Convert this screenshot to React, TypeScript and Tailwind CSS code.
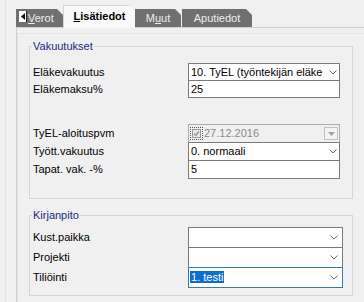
import React from "react";

const tabClip = "[clip-path:polygon(0_0,calc(100%-6px)_0,100%_6px,100%_100%,0_100%)]";

function Chevron() {
  return (
    <svg width="8" height="5" viewBox="0 0 8 5" className="shrink-0">
      <path d="M0.5 0.5 L4 4 L7.5 0.5" fill="none" stroke="#6b6b6b" strokeWidth="1" />
    </svg>
  );
}

function Combo({ value, wide, focused, selected }: { value?: string; wide?: boolean; focused?: boolean; selected?: boolean }) {
  return (
    <div
      className={`flex items-center h-full bg-white border pl-[1px] ${wide ? "w-[155px] pr-[4px]" : "w-[152px] pr-[2px]"} ${
        focused ? "border-[#3a78ad]" : "border-[#7a7a7a]"
      }`}
    >
      <div className="flex-1 min-w-0 overflow-hidden whitespace-nowrap">
        {selected ? (
          <span className="bg-[#0a6fd0] text-white px-px">{value}</span>
        ) : (
          <span className="pl-px">{value}</span>
        )}
      </div>
      <Chevron />
    </div>
  );
}

function Edit({ value }: { value: string }) {
  return (
    <div className="flex items-center h-full w-[152px] bg-white border border-[#7a7a7a] pl-[2px]">{value}</div>
  );
}

function DateBox() {
  return (
    <div className="flex items-center h-full w-[152px] bg-[#f0f0f0] border border-[#adadad] pl-[1px] pr-[1px]">
      <div className="border border-dotted border-[#555] p-px">
        <div className="w-[9px] h-[9px] border border-[#9a9a9a] bg-[#e6e6e6] flex items-center justify-center">
          <svg width="7" height="7" viewBox="0 0 7 7">
            <path d="M1 3.5 L2.8 5.3 L6 1.5" fill="none" stroke="#8c8c8c" strokeWidth="1.2" />
          </svg>
        </div>
      </div>
      <span className="ml-px text-[#8a8a8a] flex-1">27.12.2016</span>
      <div className="w-[14px] h-[13px] border border-[#c2c2c2] bg-[#f4f4f4] flex items-center justify-center">
        <svg width="7" height="4" viewBox="0 0 7 4">
          <path d="M0 0 L7 0 L3.5 4 Z" fill="#a0a0a0" />
        </svg>
      </div>
    </div>
  );
}

function Row({ label, h, children, className = "" }: { label: string; h: string; children: React.ReactNode; className?: string }) {
  return (
    <div className={`flex items-center ${h} ${className}`}>
      <div className="w-[155px] shrink-0 whitespace-nowrap">{label}</div>
      {children}
    </div>
  );
}

export default function App() {
  return (
    <div className="w-[364px] h-[302px] bg-[#f0f0f0] overflow-hidden flex font-['Liberation_Sans',Arial,sans-serif] text-[11px] leading-[13px] text-black">
      <div className="w-[5px] shrink-0" />
      <div className="w-px shrink-0 bg-[#e2e2e2]" />
      <div className="w-[10px] shrink-0" />

      <div className="flex-1 flex flex-col min-w-0">
        {/* tab strip */}
        <div className="relative flex items-end h-[27px] shrink-0">
          <div className={`w-[47px] h-[18px] bg-[#707070] text-[#ededed] pl-[12px] flex items-center ${tabClip}`}>
            <span>
              <u>V</u>erot
            </span>
          </div>
          <div className={`relative z-10 w-[72px] h-[23px] -mb-px bg-[#f9f9f9] border-l border-t border-[#d6d6d6] font-bold flex items-center justify-center pb-[2px] ${tabClip}`}>
            <span>
              <u>L</u>isätiedot
            </span>
          </div>
          <div className={`w-[46px] h-[18px] bg-[#707070] text-[#ededed] flex items-center justify-center ${tabClip}`}>
            <span>
              M<u>u</u>ut
            </span>
          </div>
          <div className="w-px" />
          <div className={`w-[70px] h-[18px] bg-[#707070] text-[#ededed] flex items-center justify-center ${tabClip}`}>
            Aputiedot
          </div>
          <div className="absolute left-[3px] top-[11px] w-[8px] h-[11px] bg-white border-r border-[#222] flex items-center justify-center">
            <svg width="4" height="7" viewBox="0 0 4 7">
              <path d="M4 0 L0 3.5 L4 7 Z" fill="#111" />
            </svg>
          </div>
        </div>

        {/* tab page */}
        <div className="flex-1 border-t border-l border-[#d0d0d0]">
          <div className="mt-[5px] border-t border-l border-[#e4e4e4] h-full pl-[11px]">
            <fieldset className="mt-[6px] w-[324px] border border-[#d5d5d5] pl-[3px] pt-[10px] pb-[19px]">
              <legend className="text-[#1b2a80] px-px -ml-px">Vakuutukset</legend>
              <Row label="Eläkevakuutus" h="h-[18px]">
                <Combo value="10. TyEL (työntekijän eläke" />
              </Row>
              <Row label="Eläkemaksu%" h="h-[18px]" className="-mt-px">
                <Edit value="25" />
              </Row>
              <Row label="TyEL-aloituspvm" h="h-[19px]" className="mt-[26px]">
                <DateBox />
              </Row>
              <Row label="Tyött.vakuutus" h="h-[19px]" className="-mt-px">
                <Combo value="0. normaali" />
              </Row>
              <Row label="Tapat. vak. -%" h="h-[19px]" className="-mt-px">
                <Edit value="5" />
              </Row>
            </fieldset>

            <fieldset className="mt-[10px] w-[324px] border border-[#d5d5d5] pl-[3px] pt-[5px] pb-[7px]">
              <legend className="text-[#1b2a80] px-px -ml-px">Kirjanpito</legend>
              <Row label="Kust.paikka" h="h-[21px]">
                <Combo wide />
              </Row>
              <Row label="Projekti" h="h-[21px]" className="-mt-px">
                <Combo wide />
              </Row>
              <Row label="Tiliöinti" h="h-[21px]" className="-mt-px">
                <Combo wide focused selected value="1. testi" />
              </Row>
            </fieldset>
          </div>
        </div>
      </div>
    </div>
  );
}
